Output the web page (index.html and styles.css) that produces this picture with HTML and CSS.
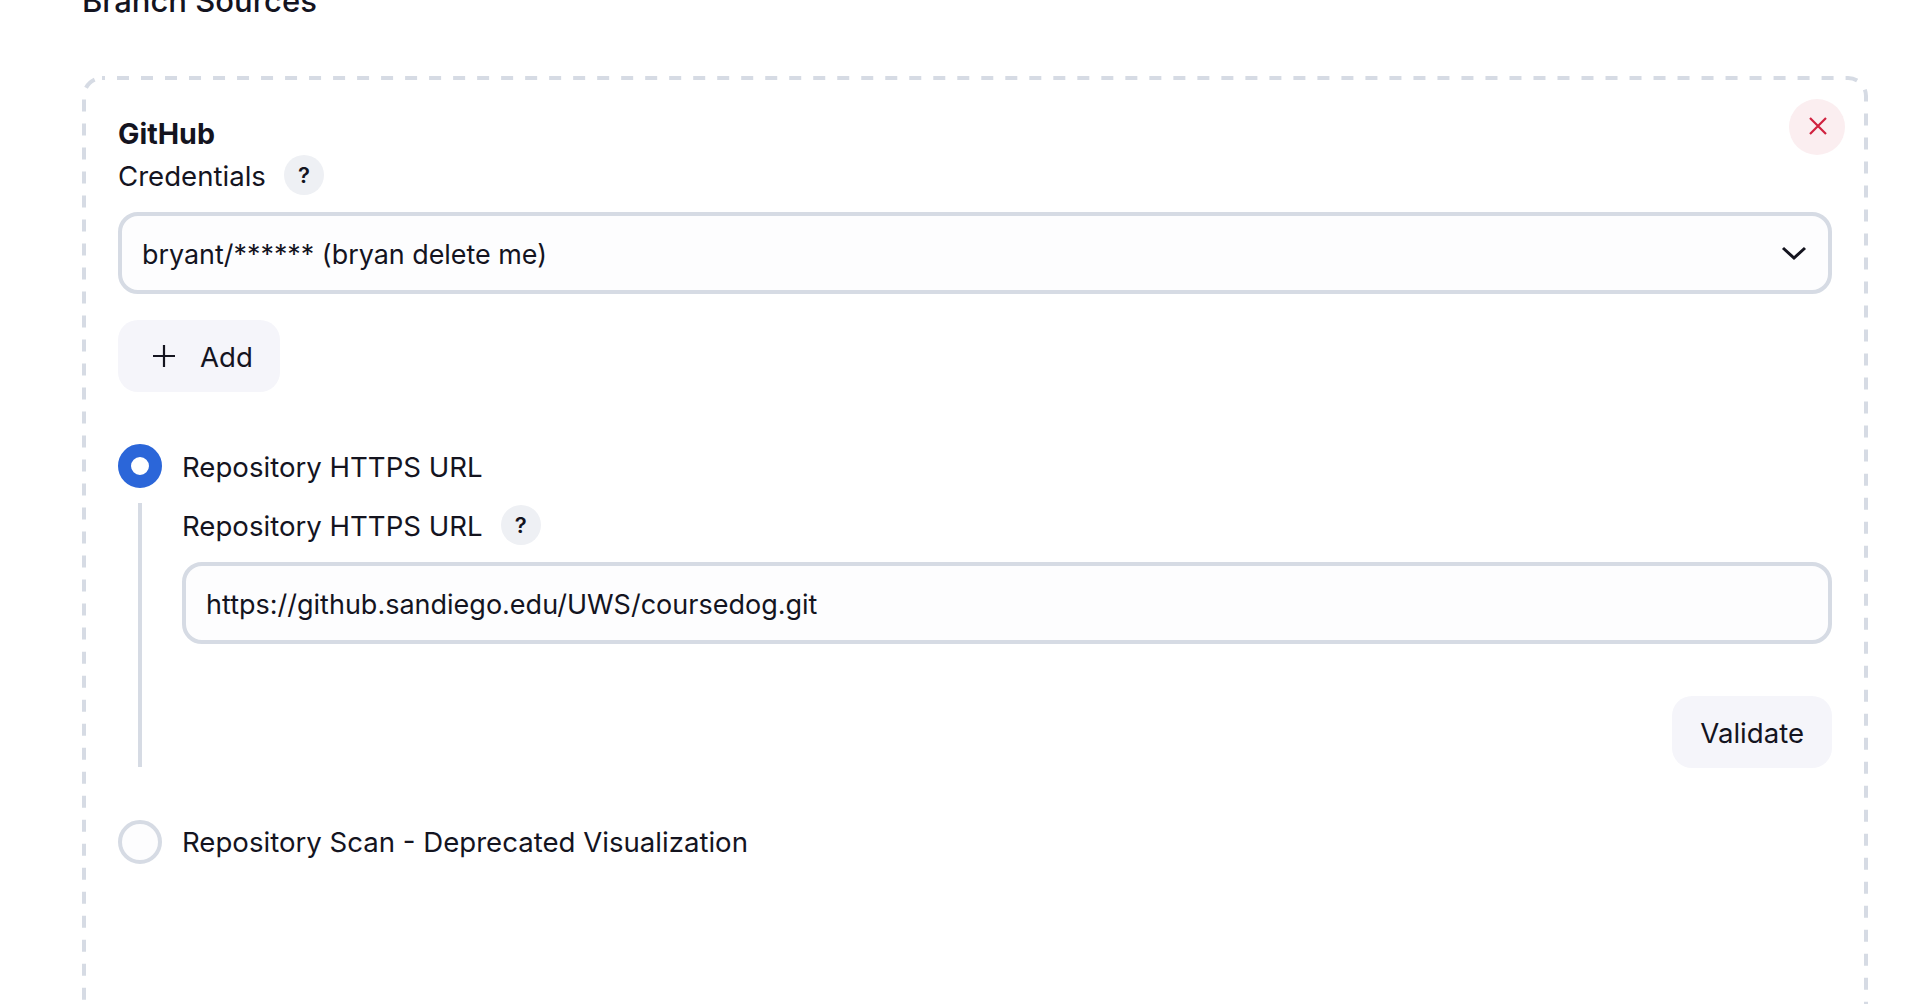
FILE: index.html
```html
<!DOCTYPE html>
<html lang="en">
<head>
    <meta charset="UTF-8">
    <title>Branch Sources</title>
    <link rel="stylesheet" href="styles.css">
</head>
<body>
    <div class="page">
        <h2 class="section-title">Branch Sources</h2>

        <div class="repeated-chunk">
            <svg class="dashed-border"><rect class="dashed-rect" rx="18" ry="18"/></svg>
            <button class="close-btn" type="button" aria-label="Delete">
                <svg viewBox="0 0 20 20" width="20" height="20"><path d="M2 2L18 18M18 2L2 18"/></svg>
            </button>

            <div class="chunk-title">GitHub</div>
            <div class="field-label">
                <span class="label-text">Credentials</span>
                <span class="help-btn">?</span>
            </div>
            <div class="select-box">
                <span class="label-text">bryant/****** (bryan delete me)</span>
                <svg viewBox="0 0 26 16" width="26" height="16"><path d="M2 3L13 13L24 3"/></svg>
            </div>
            <button class="btn add-btn" type="button">
                <svg viewBox="0 0 24 24" width="24" height="24"><path d="M12 1V23M1 12H23"/></svg>
                <span class="label-text">Add</span>
            </button>

            <div class="radio-row">
                <span class="radio checked"></span>
                <span class="label-text">Repository HTTPS URL</span>
            </div>
            <div class="radio-block">
                <div class="field-label">
                    <span class="label-text">Repository HTTPS URL</span>
                    <span class="help-btn">?</span>
                </div>
                <div class="text-input">
                    <span class="label-text">https://github.sandiego.edu/UWS/coursedog.git</span>
                </div>
                <div class="validate-row">
                    <button class="btn" type="button"><span class="label-text">Validate</span></button>
                </div>
            </div>

            <div class="radio-row second">
                <span class="radio"></span>
                <span>Repository Scan - Deprecated Visualization</span>
            </div>
        </div>
    </div>
</body>
</html>
```

FILE: styles.css
```css
html, body {
    height: 100%;
    margin: 0;
    overflow: hidden;
    background: #fff;
}
body {
    font-family: Inter, "Liberation Sans", sans-serif;
    font-size: 27.6px;
    color: #14141f;
}
.page {
    padding: 0 62px 0 82px;
    margin-top: -17px;
}
.section-title {
    margin: 0 0 57px;
    height: 36px;
    font-size: 31px;
    line-height: 36px;
    font-weight: 500;
}
.repeated-chunk {
    position: relative;
    box-sizing: border-box;
    height: 1004px;
    padding: 39px 36px 0;
}
.dashed-border {
    position: absolute;
    top: 0;
    left: 0;
    width: 100%;
    height: 100%;
}
.dashed-rect {
    x: 2px;
    y: 2px;
    width: calc(100% - 4px);
    height: calc(100% - 4px);
    fill: none;
    stroke: #d6dbe4;
    stroke-width: 4;
    stroke-dasharray: 12 12.008;
    stroke-dashoffset: 9;
}
.close-btn {
    position: absolute;
    top: 23px;
    right: 23px;
    display: flex;
    align-items: center;
    justify-content: center;
    width: 56px;
    height: 56px;
    padding: 0 0 3px 2px;
    border: none;
    border-radius: 50%;
    background: #fbeef0;
}
.close-btn svg path {
    fill: none;
    stroke: #d0213e;
    stroke-width: 2.2;
}
.chunk-title {
    height: 34px;
    font-size: 28.6px;
    line-height: 38px;
    font-weight: 700;
}
.label-text {
    padding-top: 2px;
}
.field-label {
    display: flex;
    align-items: center;
    gap: 18px;
    height: 40px;
    margin-top: 6px;
}
.help-btn {
    display: flex;
    align-items: center;
    justify-content: center;
    width: 40px;
    height: 40px;
    border-radius: 50%;
    background: #eef0f4;
    font-size: 22px;
    font-weight: 600;
}
.select-box,
.text-input {
    box-sizing: border-box;
    display: flex;
    align-items: center;
    height: 82px;
    margin-top: 17px;
    padding: 0 20px;
    border: 4px solid #d6dbe4;
    border-radius: 20px;
    background: #fdfdfe;
    font-size: 27px;
}
.select-box {
    justify-content: space-between;
    padding-right: 21px;
    font-size: 26.9px;
}
.select-box svg path {
    fill: none;
    stroke: #14141f;
    stroke-width: 3;
}
.btn {
    display: inline-flex;
    align-items: center;
    height: 72px;
    padding: 0 28px;
    border: none;
    border-radius: 20px;
    background: #f5f5fa;
    color: #14141f;
    font: inherit;
}
.add-btn {
    gap: 24px;
    margin-top: 26px;
    padding-left: 34px;
    padding-right: 27px;
}
.add-btn svg path {
    fill: none;
    stroke: #14141f;
    stroke-width: 2.2;
}
.radio-row {
    display: flex;
    align-items: center;
    gap: 20px;
    height: 44px;
    margin-top: 52px;
}
.radio-row.second {
    margin-top: 53px;
}
.radio {
    box-sizing: border-box;
    width: 44px;
    height: 44px;
    border: 4px solid #d6dbe4;
    border-radius: 50%;
    background: #fdfdfe;
}
.radio.checked {
    border: 13px solid #2b66d9;
    background: #fff;
}
.radio-block {
    margin: 15px 0 0 20px;
    padding: 0 0 0 40px;
    border-left: 4px solid #d6dbe4;
    height: 264px;
}
.radio-block .field-label {
    margin-top: 0;
    padding-top: 2px;
}
.validate-row {
    display: flex;
    justify-content: flex-end;
    margin-top: 52px;
}
```
